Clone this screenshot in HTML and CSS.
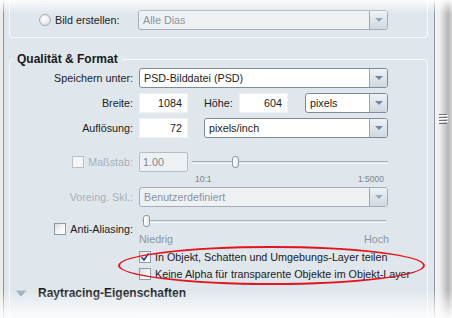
FILE: index.html
```html
<!DOCTYPE html>
<html>
<head>
<meta charset="utf-8">
<link rel="stylesheet" href="styles.css">
</head>
<body>
<div class="app">
  <div class="edge"></div>
  <div class="panel">
    <div class="group-top">
      <div class="row top-row">
        <span class="radio-wrap"><span class="radio"></span><span>Aktuelle Ansicht</span></span>
      </div>
      <div class="row top-row">
        <span class="radio-wrap top-lbl"><span class="radio"></span><span>Bild erstellen:</span></span>
        <div class="select disabled w-top"><span class="val">Alle Dias</span><span class="btn"><i class="arrow"></i></span></div>
      </div>
    </div>

    <fieldset class="group-main">
      <legend>Qualität &amp; Format</legend>

      <div class="row r1">
        <span class="lbl">Speichern unter:</span>
        <div class="select w-full"><span class="val">PSD-Bilddatei (PSD)</span><span class="btn"><i class="arrow"></i></span></div>
      </div>

      <div class="row r2">
        <span class="lbl">Breite:</span>
        <span class="num">1084</span>
        <span class="lbl2">Höhe:</span>
        <span class="num">604</span>
        <div class="select w-unit"><span class="val">pixels</span><span class="btn"><i class="arrow"></i></span></div>
      </div>

      <div class="row r3">
        <span class="lbl">Auflösung:</span>
        <span class="num">72</span>
        <div class="select w-res"><span class="val">pixels/inch</span><span class="btn"><i class="arrow"></i></span></div>
      </div>

      <div class="row r4">
        <span class="lbl dis"><span class="cb cb-dis"></span>Maßstab:</span>
        <span class="num-dis">1.00</span>
        <div class="slider s-mass"><span class="track"></span><span class="thumb t-mass"></span></div>
      </div>
      <div class="scale">
        <span>10:1</span><span>1:5000</span>
      </div>

      <div class="row r5">
        <span class="lbl dis">Voreing. Skl.:</span>
        <div class="select disabled w-full"><span class="val">Benutzerdefiniert</span><span class="btn"><i class="arrow"></i></span></div>
      </div>

      <div class="anti">
        <span class="lbl anti-lbl"><span class="cb"></span>Anti-Aliasing:</span>
        <div class="anti-ctl">
          <div class="slider s-anti"><span class="track"></span><span class="thumb t-anti"></span></div>
          <div class="range-lbl"><span>Niedrig</span><span>Hoch</span></div>
        </div>
      </div>

      <div class="chk c1"><span class="cb"><svg width="10" height="10" viewBox="0 0 10 10"><path d="M1.6 5.2 L4 8 L8.6 1.4" fill="none" stroke="#27398a" stroke-width="1.6"/></svg></span><span>In Objekt, Schatten und Umgebungs-Layer teilen</span></div>
      <div class="chk c2"><span class="cb"></span><span>Keine Alpha für transparente Objekte im Objekt-Layer</span></div>

      <div class="section">
        <svg class="tri" width="12" height="7" viewBox="0 0 12 7"><defs><linearGradient id="tg" x1="0" y1="0" x2="0" y2="1"><stop offset="0" stop-color="#a9b8c6"/><stop offset="1" stop-color="#7f93a7"/></linearGradient></defs><path d="M0.5 0.5 H11.5 L6 6.5 Z" fill="url(#tg)"/></svg>
        <span class="sec-title">Raytracing-Eigenschaften</span>
      </div>
      <div class="next-box"></div>
    </fieldset>
  </div>
  <div class="vline"></div>
  <div class="scroll">
    <svg width="9" height="10" viewBox="0 0 9 10"><g fill="#6f6f6f"><rect x="0" y="0" width="8" height="1"/><rect x="0" y="3" width="8" height="1"/><rect x="0" y="6" width="8" height="1"/><rect x="0" y="9" width="8" height="1"/></g><g fill="#ffffff"><rect x="1" y="1" width="8" height="1"/><rect x="1" y="4" width="8" height="1"/><rect x="1" y="7" width="8" height="1"/></g></svg>
  </div>
</div>
<div class="fade"></div>
<div class="ellipse"></div>
</body>
</html>
```

FILE: styles.css
```css
html, body {
  margin: 0;
  padding: 0;
}
body {
  width: 452px;
  height: 318px;
  overflow: hidden;
  position: relative;
  background: #fff;
  font-family: "Liberation Sans", Arial, sans-serif;
  font-size: 10.75px;
  color: #1c1c1c;
}
.app {
  display: flex;
  height: 318px;
}
.edge {
  width: 3px;
  background: #ececec;
  border-right: 1px solid #8b9197;
}
.panel {
  flex: 1;
  background: #dfe6ec;
  padding: 0 6px 0 5px;
  overflow: hidden;
}
.vline {
  width: 1px;
  background: #8d949a;
}
.scroll {
  width: 17px;
  background: linear-gradient(to right, #f5f5f5 0, #ededed 5px, #d2d2d2 9px, #b6b6b6 13px, #c2c2c2 15px, #d6d6d6 17px);
  display: flex;
  flex-direction: column;
  align-items: center;
  padding-top: 114px;
  box-sizing: border-box;
}

/* rows */
.row {
  display: flex;
  align-items: center;
  height: 20px;
}
.group-top {
  border: 1px solid #f9fbfc;
  border-radius: 4px;
  margin-top: -21px;
  padding: 6px 0 7px 0;
}
.top-row + .top-row { margin-top: 4px; }
.radio-wrap {
  display: flex;
  align-items: center;
  padding-left: 29px;
  color: #222;
}
.top-lbl { width: 128px; box-sizing: border-box; }
.radio {
  width: 12px;
  height: 12px;
  box-sizing: border-box;
  border-radius: 50%;
  border: 1px solid #a3acb4;
  background: radial-gradient(circle at 40% 35%, #ffffff 0, #eef1f3 40%, #cfd6dc 100%);
  margin-right: 4px;
}

/* fieldset */
.group-main {
  margin: 14px 0 0 0;
  padding: 2px 0 0 0;
  border: 1px solid #f9fbfc;
  border-radius: 4px;
  min-width: 0;
  height: 400px;
}
.group-main legend {
  margin-left: 3px;
  padding: 0 4px;
  font-weight: bold;
  font-size: 12px;
  line-height: 14px;
  color: #1a1a1a;
}
.lbl {
  width: 129px;
  box-sizing: border-box;
  padding-right: 6px;
  text-align: right;
  display: flex;
  justify-content: flex-end;
  align-items: center;
}
.lbl.dis { color: #a7b0b8; }
.lbl2 {
  margin-left: 16px;
  width: 35px;
}
.r2, .r3 { margin-top: 5px; }
.r4 { margin-top: 14px; }

/* select */
.select {
  display: flex;
  height: 20px;
  box-sizing: border-box;
  border: 1px solid #7f8c98;
  border-radius: 3px;
  background: #fff;
  overflow: hidden;
}
.select .val {
  flex: 1;
  padding-left: 4px;
  line-height: 18px;
  white-space: nowrap;
}
.select .btn {
  width: 17px;
  border-left: 1px solid #9aa7b2;
  background: linear-gradient(#eef2f5, #d0d9e0);
  display: flex;
  align-items: center;
  justify-content: center;
}
.arrow {
  width: 0;
  height: 0;
  border-left: 4px solid transparent;
  border-right: 4px solid transparent;
  border-top: 4px solid #728699;
}
.select.disabled {
  border-color: #a3aeb8;
  background: #edf1f4;
}
.select.disabled .val { color: #8a949d; }
.select.disabled .arrow { border-top-color: #98a8b7; }
.w-top { width: 250px; }
.w-full { width: 249px; }
.w-unit { width: 83px; margin-left: 17px; }
.w-res { width: 184px; margin-left: 16px; }

/* number inputs */
.num {
  width: 49px;
  height: 20px;
  box-sizing: border-box;
  border: 1px solid #eef1f4;
  background: #fff;
  text-align: right;
  padding-right: 5px;
  line-height: 18px;
}
.num-dis {
  width: 49px;
  height: 20px;
  box-sizing: border-box;
  border: 1px solid #b4bec6;
  border-radius: 2px;
  background: #eef1f3;
  color: #7c8690;
  padding-left: 3px;
  line-height: 18px;
}

/* checkbox */
.cb {
  width: 12px;
  height: 12px;
  box-sizing: border-box;
  border: 1px solid #8f9aa4;
  background: linear-gradient(135deg, #d9dee3 0, #f6f7f8 60%, #ffffff 100%);
  margin-right: 4px;
  display: inline-flex;
  align-items: center;
  justify-content: center;
  flex: none;
}
.cb-dis { border-color: #b9c1c8; background: #f3f5f7; }

/* sliders */
.slider {
  position: relative;
  height: 13px;
}
.track {
  position: absolute;
  left: 0;
  right: 0;
  top: 5px;
  height: 1px;
  border-top: 1px solid #a5afb8;
  border-bottom: 1px solid #f5f7f9;
}
.thumb {
  position: absolute;
  top: 0;
  width: 7px;
  height: 12px;
  box-sizing: border-box;
  border: 1px solid #8d99a3;
  border-radius: 3px;
  background: linear-gradient(to right, #ffffff, #e6eaee);
}
.s-mass { width: 196px; margin-left: 4px; margin-top: 1px; }
.t-mass { left: 40px; }
.s-anti { width: 244px; margin-left: 3px; }
.t-anti { left: 1px; }
.scale {
  display: flex;
  justify-content: space-between;
  margin-left: 185px;
  width: 189px;
  height: 14px;
  font-size: 8.5px;
  color: #7b858e;
  line-height: 13px;
  padding-top: 1px;
  box-sizing: border-box;
}
.r5 { margin-top: 1px; }

.anti {
  display: flex;
  margin-top: 8px;
}
.anti-lbl {
  height: 14px;
  margin-top: 7px;
  color: #1c1c1c;
}
.anti-lbl .cb { margin-right: 4px; }
.anti-ctl { width: 250px; }
.range-lbl {
  display: flex;
  justify-content: space-between;
  color: #8e979f;
  line-height: 12px;
  margin-top: 5px;
}

.chk {
  display: flex;
  align-items: center;
  padding-left: 129px;
  height: 16px;
}
.c1 { margin-top: 4px; }
.c2 { margin-top: 1px; }
.chk .cb { margin-right: 4px; }

.section {
  display: flex;
  align-items: center;
  height: 16px;
  margin-top: 3px;
  padding-left: 5px;
}
.tri { margin-right: 11px; }
.sec-title {
  font-weight: bold;
  font-size: 12px;
  color: #1c1c1c;
}
.next-box {
  margin: 11px 0 0 129px;
  width: 248px;
  height: 20px;
  border: 1px solid #eef2f5;
  border-radius: 3px;
}

/* overlays */
.fade {
  position: absolute;
  left: 0;
  top: 0;
  right: 0;
  bottom: 0;
  pointer-events: none;
  background: linear-gradient(to bottom, rgba(255,255,255,0.92) 0, rgba(255,255,255,0.55) 5px, rgba(255,255,255,0) 14px, rgba(255,255,255,0) 290px, rgba(255,255,255,0.55) 306px, rgba(255,255,255,0.9) 318px);
}
.ellipse {
  position: absolute;
  left: 118px;
  top: 246px;
  width: 307px;
  height: 39px;
  box-sizing: border-box;
  border: 2px solid #e3141c;
  border-radius: 50%;
}
```
